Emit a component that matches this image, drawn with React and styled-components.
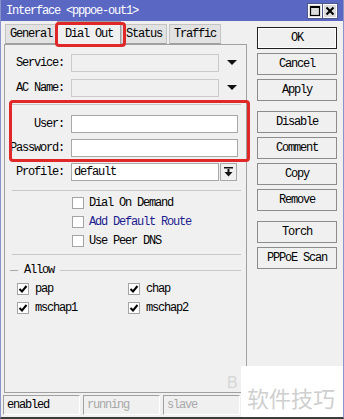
import React from 'react';
import styled, { createGlobalStyle } from 'styled-components';

const mono = `"Liberation Mono", "DejaVu Sans Mono", monospace`;

const GlobalStyle = createGlobalStyle`
  html, body { margin: 0; padding: 0; background: #ffffff; }
  * { box-sizing: border-box; }
  body { font-family: ${mono}; font-size: 12px; letter-spacing: -1.2px; color: #000; }
`;

const Window = styled.div`
  position: relative;
  width: 344px;
  height: 419px;
  display: flex;
  flex-direction: column;
  background: #f0f0f0;
  border-left: 1px solid #8a94c8;
  border-right: 1px solid #8a94c8;
  border-bottom: 2px solid #3c3c3c;
  overflow: hidden;
`;

const TitleBar = styled.div`
  height: 21px;
  flex: none;
  display: flex;
  align-items: center;
  padding: 0 6px 0 5px;
  background: #5a68c4;
  color: #ffffff;
  line-height: 14px;
`;

const TitleText = styled.span`
  flex: 1;
  padding-top: 1px;
`;

const TitleButtons = styled.div`
  display: flex;
  gap: 1px;
  margin-top: 1px;
`;

const TitleButton = styled.div`
  width: 14px;
  height: 14px;
  display: flex;
  align-items: center;
  justify-content: center;
  background: #dcdcdc;
  border: 1px solid #ffffff;
  outline: 1px solid #50588a;
`;

const Body = styled.div`
  flex: 1;
  display: flex;
  padding-left: 3px;
  min-height: 0;
`;

const LeftCol = styled.div`
  width: 243px;
  display: flex;
  flex-direction: column;
`;

const TabBar = styled.div`
  height: 23px;
  flex: none;
  display: flex;
  align-items: flex-end;
  gap: 2px;
  padding-left: 1px;
  position: relative;
  z-index: 1;
`;

const Tab = styled.div`
  height: ${p => (p.$active ? 24 : 20)}px;
  margin: 0 ${p => (p.$active ? -2 : 0)}px ${p => (p.$active ? -1 : 0)}px;
  padding: 0 ${p => (p.$active ? 7 : 4)}px;
  display: flex;
  align-items: center;
  background: ${p => (p.$active ? '#f0f0f0' : '#e2e2e2')};
  border: 1px solid ${p => (p.$active ? '#a0a0a0' : '#c4c4c4')};
  border-bottom: ${p => (p.$active ? 'none' : '1px solid #a0a0a0')};
  line-height: 14px;
`;

const Panel = styled.div`
  flex: 1;
  display: flex;
  flex-direction: column;
  padding: 9px 0 0 0;
  border: 1px solid #a0a0a0;
  background: #f0f0f0;
`;

const Row = styled.div`
  height: 18px;
  display: flex;
  align-items: center;
  margin-top: ${p => p.$mt || 0}px;
`;

const Label = styled.div`
  width: 59px;
  margin-right: 7px;
  text-align: right;
  white-space: nowrap;
  line-height: 14px;
`;

const Input = styled.div`
  width: ${p => p.$w}px;
  height: 100%;
  display: flex;
  align-items: center;
  padding-left: 2px;
  background: ${p => (p.$disabled ? '#f0f0f0' : '#ffffff')};
  border: 1px solid ${p => (p.$disabled ? '#cacaca' : '#a8a8a8')};
  line-height: 14px;
`;

const ArrowCell = styled.div`
  width: 18px;
  height: 100%;
  margin-left: 4px;
  display: flex;
  align-items: center;
  justify-content: center;
`;

const DropButton = styled.div`
  width: 17px;
  height: 100%;
  margin-left: 1px;
  display: flex;
  align-items: center;
  justify-content: center;
  background: #f0f0f0;
  border: 1px solid #a8a8a8;
`;

const Separator = styled.div`
  height: 1px;
  margin: ${p => p.$mt}px 5px ${p => p.$mb}px 7px;
  background: #c8c8c8;
`;

const CheckRow = styled.label`
  height: 19px;
  display: flex;
  align-items: center;
  gap: ${p => p.$gap || 5}px;
  padding-left: ${p => p.$indent || 0}px;
  color: ${p => p.$color || '#000'};
  line-height: 14px;
`;

const Box = styled.span`
  width: 12px;
  height: 12px;
  flex: none;
  display: flex;
  align-items: center;
  justify-content: center;
  background: #ffffff;
  border: 1px solid #a4a4a4;
`;

const Legend = styled.div`
  height: 14px;
  margin-top: 8px;
  display: flex;
  align-items: center;
  padding: 0 5px 0 5px;
  line-height: 14px;
  &::before {
    content: '';
    width: 8px;
    height: 1px;
    margin-right: 6px;
    background: #a8a8a8;
  }
  &::after {
    content: '';
    flex: 1;
    height: 1px;
    margin-left: 6px;
    background: #c8c8c8;
  }
`;

const AllowGrid = styled.div`
  display: grid;
  grid-template-columns: 111px 1fr;
  padding-left: 12px;
  margin-top: 2px;
`;

const RightCol = styled.div`
  width: 80px;
  margin-left: 10px;
  padding-top: 6px;
  display: flex;
  flex-direction: column;
  gap: 4px;
`;

const Button = styled.div`
  height: 22px;
  display: flex;
  align-items: center;
  justify-content: center;
  margin-top: ${p => p.$mt || 0}px;
  background: #f0f0f0;
  border: 1px solid ${p => (p.$default ? '#202020' : '#8c8c8c')};
  box-shadow: ${p => (p.$default ? 'inset 0 0 0 1px #ffffff' : 'none')};
  line-height: 14px;
`;

const StatusBar = styled.div`
  height: 24px;
  flex: none;
  display: flex;
  gap: 3px;
  padding: 2px 0 2px 2px;
`;

const StatusCell = styled.div`
  width: 77px;
  display: flex;
  align-items: center;
  padding-left: 3px;
  border-top: 1px solid #a0a0a0;
  border-left: 1px solid #a0a0a0;
  border-bottom: 1px solid #ffffff;
  border-right: 1px solid #ffffff;
  color: ${p => (p.$dim ? '#a8a8a8' : '#000')};
  line-height: 14px;
`;

const Highlight = styled.div`
  position: absolute;
  left: ${p => p.$x}px;
  top: ${p => p.$y}px;
  width: ${p => p.$w}px;
  height: ${p => p.$h}px;
  border: 3px solid #e02828;
  border-radius: 4px;
  pointer-events: none;
  z-index: 5;
`;

const Watermark = styled.div`
  position: absolute;
  right: 0;
  bottom: 0;
  width: 102px;
  height: 51px;
  display: flex;
  align-items: center;
  justify-content: flex-end;
  padding: 10px 8px 0 0;
  background: #ffffff;
  color: #cfcfcf;
  font-family: "Noto Sans CJK SC", "Noto Sans", sans-serif;
  font-size: 22px;
  letter-spacing: 0;
  z-index: 6;
  &::before {
    content: 'B';
    position: absolute;
    left: -14px;
    top: 8px;
    font-family: "Liberation Sans", sans-serif;
    font-size: 16px;
    color: #d6d6d6;
  }
`;

const Triangle = () => (
  <svg width="10" height="6" viewBox="0 0 10 6">
    <polygon points="0,0 10,0 5,5" fill="#111" />
  </svg>
);

const DropIcon = () => (
  <svg width="9" height="10" viewBox="0 0 9 10">
    <rect x="0" y="0" width="9" height="1.5" fill="#111" />
    <rect x="3.5" y="2" width="2" height="3" fill="#111" />
    <polygon points="0.5,5 8.5,5 4.5,9.5" fill="#111" />
  </svg>
);

const Check = ({ checked }) => (
  <Box>
    {checked && (
      <svg width="10" height="10" viewBox="0 0 10 10">
        <polyline points="1.5,5 4,7.5 8.5,2" fill="none" stroke="#000" strokeWidth="2" />
      </svg>
    )}
  </Box>
);

const buttons = [
  { label: 'OK', def: true },
  { label: 'Cancel' },
  { label: 'Apply' },
  { label: 'Disable', mt: 6 },
  { label: 'Comment' },
  { label: 'Copy' },
  { label: 'Remove' },
  { label: 'Torch', mt: 6 },
  { label: 'PPPoE Scan' },
];

export default function App() {
  return (
    <>
      <GlobalStyle />
      <Window>
        <TitleBar>
          <TitleText>Interface &lt;pppoe-out1&gt;</TitleText>
          <TitleButtons>
            <TitleButton>
              <svg width="10" height="10" viewBox="0 0 10 10">
                <rect x="0.5" y="0.5" width="9" height="9" fill="none" stroke="#000" strokeWidth="1.2" />
                <rect x="0.5" y="0.5" width="9" height="1.5" fill="#000" />
              </svg>
            </TitleButton>
            <TitleButton>
              <svg width="10" height="10" viewBox="0 0 10 10">
                <path d="M1.5 1.5 L8.5 8.5 M8.5 1.5 L1.5 8.5" stroke="#000" strokeWidth="2" />
              </svg>
            </TitleButton>
          </TitleButtons>
        </TitleBar>

        <Body>
          <LeftCol>
            <TabBar>
              <Tab>General</Tab>
              <Tab $active>Dial Out</Tab>
              <Tab>Status</Tab>
              <Tab>Traffic</Tab>
            </TabBar>
            <Panel>
              <Row>
                <Label>Service:</Label>
                <Input $w={148} $disabled />
                <ArrowCell><Triangle /></ArrowCell>
              </Row>
              <Row $mt={7}>
                <Label>AC Name:</Label>
                <Input $w={148} $disabled />
                <ArrowCell><Triangle /></ArrowCell>
              </Row>
              <Separator $mt={7} $mb={0} />
              <Row $mt={10}>
                <Label>User:</Label>
                <Input $w={167} />
              </Row>
              <Row $mt={6}>
                <Label>Password:</Label>
                <Input $w={167} />
              </Row>
              <Row $mt={6}>
                <Label>Profile:</Label>
                <Input $w={148}>default</Input>
                <DropButton><DropIcon /></DropButton>
              </Row>
              <Separator $mt={9} $mb={2} />
              <CheckRow $indent={67}><Check />Dial On Demand</CheckRow>
              <CheckRow $indent={67} $color="#1c1c8e"><Check />Add Default Route</CheckRow>
              <CheckRow $indent={67}><Check />Use Peer DNS</CheckRow>
              <Separator $mt={4} $mb={0} />
              <Legend>Allow</Legend>
              <AllowGrid>
                <CheckRow $gap={6}><Check checked />pap</CheckRow>
                <CheckRow $gap={6}><Check checked />chap</CheckRow>
                <CheckRow $gap={6}><Check checked />mschap1</CheckRow>
                <CheckRow $gap={6}><Check checked />mschap2</CheckRow>
              </AllowGrid>
            </Panel>
          </LeftCol>

          <RightCol>
            {buttons.map(b => (
              <Button key={b.label} $default={b.def} $mt={b.mt}>{b.label}</Button>
            ))}
          </RightCol>
        </Body>

        <StatusBar>
          <StatusCell>enabled</StatusCell>
          <StatusCell $dim>running</StatusCell>
          <StatusCell $dim>slave</StatusCell>
        </StatusBar>

        <Highlight $x={54} $y={22} $w={71} $h={25} />
        <Highlight $x={8} $y={100} $w={241} $h={62} />
        <Watermark>软件技巧</Watermark>
      </Window>
    </>
  );
}
